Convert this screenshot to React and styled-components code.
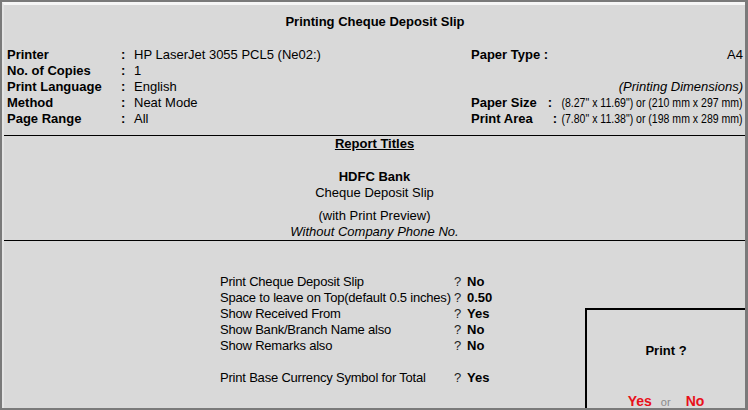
import React from 'react';
import styled, { createGlobalStyle } from 'styled-components';

const GlobalStyle = createGlobalStyle`
  html, body {
    margin: 0;
    padding: 0;
  }
  body {
    width: 748px;
    height: 410px;
    overflow: hidden;
    background: #7a7a7a;
    font-family: "Liberation Sans", Arial, sans-serif;
    font-size: 13px;
    color: #000;
  }
`;

const Window = styled.div`
  box-sizing: border-box;
  margin: 2px 3px 0 2px;
  height: 406px;
  background: #d9d9d9;
  border-top: 3px solid #f6f6f6;
  border-left: 2px solid #e4e4e4;
  display: flex;
  flex-direction: column;
  overflow: hidden;
`;

const Header = styled.header`
  padding: 9px 2px 8px 3px;
  border-bottom: 1px solid #000;
  line-height: 16px;
`;

const Title = styled.div`
  text-align: center;
  font-weight: bold;
  margin-bottom: 17px;
`;

const InfoRow = styled.div`
  display: flex;
  justify-content: space-between;
`;

const Fields = styled.div`
  display: grid;
  grid-template-columns: 114px 13px auto;
`;

const Label = styled.span`
  font-weight: bold;
`;

const Paper = styled.div`
  width: 272px;
  display: flex;
  flex-direction: column;
`;

const PaperRow = styled.div`
  display: flex;
  height: 16px;
  white-space: nowrap;
  justify-content: ${(p) => (p.$end ? 'flex-end' : 'flex-start')};
  font-style: ${(p) => (p.$italic ? 'italic' : 'normal')};
`;

const Colon = styled.span`
  font-weight: bold;
  margin-left: ${(p) => p.$offset}px;
`;

const Value = styled.span`
  flex: 1;
  min-width: 0;
  display: flex;
  justify-content: flex-end;
`;

/* stand-in for Arial Narrow, which isn't installed */
const Narrow = styled.span`
  flex-shrink: 0;
  transform: scaleX(0.81);
  transform-origin: right center;
`;

const Titles = styled.section`
  text-align: center;
  line-height: 16px;
  border-bottom: 1px solid #000;
`;

const TitlesHeading = styled.div`
  font-weight: bold;
  text-decoration: underline;
  margin-bottom: 17px;
`;

const TitleLine = styled.div`
  font-weight: ${(p) => (p.$bold ? 'bold' : 'normal')};
  font-style: ${(p) => (p.$italic ? 'italic' : 'normal')};
  margin-top: ${(p) => p.$gap || 0}px;
`;

const Options = styled.section`
  flex: 1;
  position: relative;
  padding: 33px 0 0 216px;
  line-height: 16px;
`;

const Questions = styled.div`
  display: grid;
  grid-template-columns: 234px 13px auto;
  white-space: nowrap;
`;

const Question = styled.span`
  letter-spacing: -0.2px;
`;

const Ask = styled.span`
  color: #222;
`;

const Answer = styled.span`
  font-weight: bold;
`;

const Blank = styled.div`
  grid-column: 1 / -1;
  height: 16px;
`;

const PrintBox = styled.div`
  position: absolute;
  top: 67px;
  right: 0;
  box-sizing: border-box;
  width: 160px;
  height: 130px;
  border-top: 2px solid #000;
  border-left: 2px solid #000;
  padding-top: 33px;
  text-align: center;
`;

const PrintPrompt = styled.div`
  font-weight: bold;
`;

const Choices = styled.div`
  margin-top: 34px;
  display: flex;
  justify-content: center;
  align-items: baseline;
`;

const Choice = styled.span`
  color: #e8101a;
  font-weight: bold;
  font-size: 14px;
`;

const Or = styled.span`
  color: #8a8a8a;
  font-size: 11px;
  margin: 0 15px 0 9px;
`;

const fields = [
  ['Printer', 'HP LaserJet 3055 PCL5 (Ne02:)'],
  ['No. of Copies', '1'],
  ['Print Language', 'English'],
  ['Method', 'Neat Mode'],
  ['Page Range', 'All'],
];

const questions = [
  ['Print Cheque Deposit Slip', 'No'],
  ['Space to leave on Top(default 0.5 inches)', '0.50'],
  ['Show Received From', 'Yes'],
  ['Show Bank/Branch Name also', 'No'],
  ['Show Remarks also', 'No'],
  null,
  ['Print Base Currency Symbol for Total', 'Yes'],
];

const App = () => {
  return (
    <>
      <GlobalStyle />
      <Window>
        <Header>
          <Title>Printing Cheque Deposit Slip</Title>
          <InfoRow>
            <Fields>
              {fields.map(([label, value]) => (
                <React.Fragment key={label}>
                  <Label>{label}</Label>
                  <Label>:</Label>
                  <span>{value}</span>
                </React.Fragment>
              ))}
            </Fields>
            <Paper>
              <PaperRow>
                <Label>Paper Type :</Label>
                <Value>A4</Value>
              </PaperRow>
              <PaperRow />
              <PaperRow $end $italic>(Printing Dimensions)</PaperRow>
              <PaperRow>
                <Label>Paper Size</Label>
                <Colon $offset={11}>:</Colon>
                <Value>
                  <Narrow>(8.27" x 11.69") or (210 mm x 297 mm)</Narrow>
                </Value>
              </PaperRow>
              <PaperRow>
                <Label>Print Area</Label>
                <Colon $offset={20}>:</Colon>
                <Value>
                  <Narrow>(7.80" x 11.38") or (198 mm x 289 mm)</Narrow>
                </Value>
              </PaperRow>
            </Paper>
          </InfoRow>
        </Header>

        <Titles>
          <TitlesHeading>Report Titles</TitlesHeading>
          <TitleLine $bold>HDFC Bank</TitleLine>
          <TitleLine>Cheque Deposit Slip</TitleLine>
          <TitleLine $gap={7}>(with Print Preview)</TitleLine>
          <TitleLine $italic>Without Company Phone No.</TitleLine>
        </Titles>

        <Options>
          <Questions>
            {questions.map((q, i) =>
              q ? (
                <React.Fragment key={q[0]}>
                  <Question>{q[0]}</Question>
                  <Ask>?</Ask>
                  <Answer>{q[1]}</Answer>
                </React.Fragment>
              ) : (
                <Blank key={i} />
              )
            )}
          </Questions>

          <PrintBox>
            <PrintPrompt>Print ?</PrintPrompt>
            <Choices>
              <Choice>Yes</Choice>
              <Or>or</Or>
              <Choice>No</Choice>
            </Choices>
          </PrintBox>
        </Options>
      </Window>
    </>
  );
};

export default App;
